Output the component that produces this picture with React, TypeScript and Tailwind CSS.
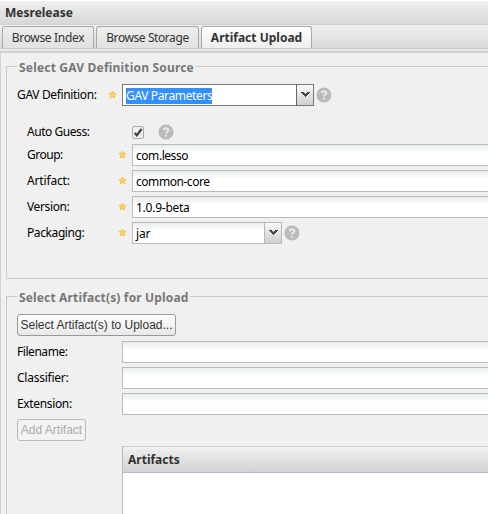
import React from "react";

function Star() {
  return (
    <svg className="block h-[9px] w-[9px] shrink-0" viewBox="0 0 10 10">
      <path d="M5 1.2 6.2 3.6 8.9 3.9 7 5.9 7.4 8.7 5 7.5 2.6 8.7 3 5.9 1.1 3.9 3.8 3.6Z" fill="#fdd558" stroke="#efbf55" strokeWidth="1" strokeLinejoin="round" />
    </svg>
  );
}

function Help() {
  return (
    <svg className="block h-4 w-4 shrink-0" viewBox="0 0 16 16">
      <circle cx="8" cy="8" r="7.5" fill="#bababa" />
      <path d="M5.7 6.3C5.7 3.4 10.3 3.5 10.3 6.1 10.3 7.6 8 7.8 8 9.5M8 10.8V12.6" fill="none" stroke="#e9e9e9" strokeWidth="2" />
    </svg>
  );
}

function Trigger({ dark }: { dark?: boolean }) {
  return (
    <span className={`flex h-[22px] shrink-0 items-center justify-center border bg-linear-to-b from-[#fafafa] to-[#cfcfcf] ${dark ? "w-[18px] border-[#777] border-l-[#666]" : "w-[18px] border-[#b5b8b8]"}`}>
      <svg className="mb-px h-[6px] w-[9px]" viewBox="0 0 9 6" shapeRendering="crispEdges">
        <path d="M0 0h3v1h1v1h1V1h1V0h3v1H8v1H7v1H6v1H5v1H4V4H3V3H2V2H1V1H0Z" fill="#444" />
      </svg>
    </span>
  );
}

function Field({ children, className = "" }: { children?: React.ReactNode; className?: string }) {
  return (
    <div className={`flex h-[22px] min-w-0 flex-1 items-center border border-r-0 border-[#b9bcbc] bg-linear-to-b from-[#e9edee] to-white to-[8px] pt-px pl-[3px] ${className}`}>
      {children}
    </div>
  );
}

function Row({ label, inner, star, children }: { label: React.ReactNode; inner?: boolean; star?: boolean; children?: React.ReactNode }) {
  return (
    <div className={`flex h-[22px] items-center ${inner ? "pl-[20px]" : "pl-[10px]"}`}>
      <div className={`flex h-full items-center ${inner ? "w-[90px]" : "w-[90px]"}`}>{label}</div>
      <div className="flex w-[15px] justify-start pb-px pl-px">{star && <Star />}</div>
      {children}
    </div>
  );
}

export default function App() {
  return (
    <div className="flex h-[514px] w-[488px] flex-col overflow-hidden bg-[#f0f0f0] font-['Noto_Sans','Open_Sans',sans-serif] text-[12px] leading-[16px] whitespace-nowrap text-black">
      <header className="flex h-[25px] shrink-0 items-center border-t border-b border-t-white border-b-[#d0d0d0] bg-linear-to-b from-[#f0f0f0] to-[#d7d7d7] pl-[5px] font-bold text-[#333]">
        <span>Mesrelease</span>
      </header>
      <nav className="flex h-[24px] shrink-0 items-end gap-[2px] border-b border-[#cacaca] bg-linear-to-b from-[#efefef] to-[#dadada] pl-[2px] text-[#333]">
        <div className="flex h-[22px] w-[92px] items-center justify-center rounded-t-[3px] border border-b-0 border-[#a9a9a9] bg-linear-to-b from-[#ededed] to-[#e2e2e2]"><span className="tracking-[-0.33px]">Browse Index</span></div>
        <div className="flex h-[22px] w-[103px] items-center justify-center rounded-t-[3px] border border-b-0 border-[#a9a9a9] bg-linear-to-b from-[#ededed] to-[#e2e2e2]"><span className="tracking-[-0.42px]">Browse Storage</span></div>
        <div className="flex h-[22px] w-[111px] items-center justify-center rounded-t-[3px] border border-b-0 border-[#a9a9a9] bg-linear-to-b from-white to-[#eee] font-bold"><span>Artifact Upload</span></div>
      </nav>
      <div className="h-[4px] shrink-0 border-b-2 border-[#d0d0d0] bg-[#eaeaea]" />
      <main className="flex flex-1 flex-col border-l border-[#d0d0d0] pl-[5px]">
        <fieldset className="mt-[5px] h-[221px] min-w-0 shrink-0 border border-r-0 border-[#c9c9c9]">
          <legend className="ml-[10px] h-[16px] pr-[1px] pl-[2px] pt-[2px] font-bold text-[#777]"><span className="tracking-[0.19px]">Select GAV Definition Source</span></legend>
          <div className="pt-[10px]">
            <Row label={<span className="tracking-[-0.34px]">GAV Definition:</span>} star>
              <div className="flex h-[22px] w-[174px] items-center border border-r-0 border-[#777] bg-white pl-[3px]">
                <span className="mt-px bg-[#3390ff] leading-[16px] tracking-[-0.36px] text-white">GAV Parameters</span>
              </div>
              <Trigger dark />
              <span className="ml-[2px]"><Help /></span>
            </Row>
          </div>
          <div className="flex flex-col gap-[4px] pt-[12px]">
            <Row inner label={<span className="mt-[5px] tracking-[-0.45px]">Auto Guess:</span>}>
              <svg className="mt-[6px] h-[13px] w-[12px]" viewBox="0 0 12 13"><rect x=".5" y=".5" width="11" height="12" rx="1.5" fill="#eee" stroke="#aaa" /><path d="m2.8 6.8 2 2.5L9.6 3" fill="none" stroke="#3a3a3a" strokeWidth="2.1" /></svg>
              <span className="mt-[5px] ml-[14px]"><Help /></span>
            </Row>
            <Row inner star label={<span className="tracking-[-0.5px]">Group:</span>}><Field><span className="tracking-[-0.45px]">com.lesso</span></Field></Row>
            <Row inner star label={<span className="tracking-[-0.15px]">Artifact:</span>}><Field><span className="tracking-[-0.45px]">common-core</span></Field></Row>
            <Row inner star label={<span className="tracking-[-0.38px]">Version:</span>}><Field><span className="tracking-[-0.25px]">1.0.9-beta</span></Field></Row>
            <Row inner star label={<span className="tracking-[-0.4px]">Packaging:</span>}>
              <div className="flex w-[132px]"><Field><span className="tracking-[-0.2px]">jar</span></Field></div>
              <Trigger />
              <span className="ml-[2px]"><Help /></span>
            </Row>
          </div>
        </fieldset>
        <fieldset className="mt-[9px] h-[260px] min-w-0 shrink-0 border border-r-0 border-[#c9c9c9]">
          <legend className="ml-[10px] h-[16px] pr-[1px] pl-[2px] pt-[2px] font-bold text-[#777]"><span className="tracking-[0.15px]">Select Artifact(s) for Upload</span></legend>
          <div className="flex flex-col gap-[4px] pt-[10px]">
            <button className="mb-px ml-[10px] flex h-[22px] w-[159px] items-center justify-center rounded-[3px] border border-[#999] bg-linear-to-b from-white to-[#e8e8e8] font-['Liberation_Sans',sans-serif] text-[12px] text-[#333]"><span>Select Artifact(s) to Upload...</span></button>
            <Row label={<span className="tracking-[-0.45px]">Filename:</span>}><Field /></Row>
            <Row label={<span className="tracking-[-0.25px]">Classifier:</span>}><Field /></Row>
            <Row label={<span className="tracking-[-0.35px]">Extension:</span>}><Field /></Row>
            <button className="ml-[10px] flex h-[22px] w-[69px] items-center justify-center rounded-[3px] border border-[#bbb] bg-[#f3f3f3] font-['Liberation_Sans',sans-serif] text-[12px] text-[#aaa]"><span>Add Artifact</span></button>
            <section className="mt-px ml-[115px] h-[80px] border-l border-[#b8b8cc] bg-white">
              <h2 className="flex h-[27px] items-center border-t border-b border-t-[#d0d0d0] border-b-[#b8b8d0] bg-linear-to-b from-[#f0f0f0] to-[#d3d3d3] pl-[5px] font-bold text-[#333]"><span>Artifacts</span></h2>
            </section>
          </div>
        </fieldset>
      </main>
    </div>
  );
}
